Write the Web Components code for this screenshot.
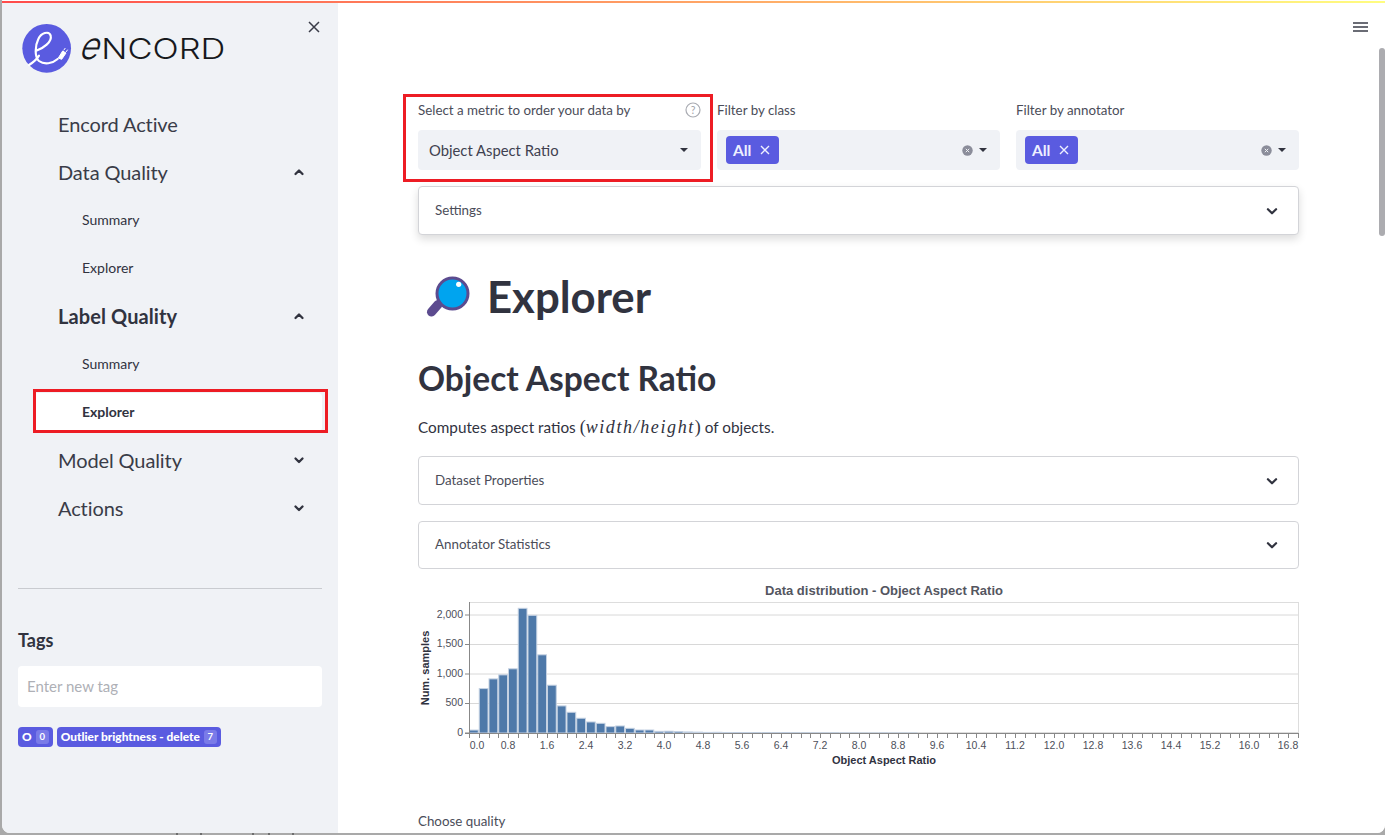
<!DOCTYPE html>
<html lang="en"><head><meta charset="utf-8"><title>Encord Active</title>
<style>
html,body{margin:0;padding:0;height:100%;overflow:hidden;background:#a9a9a9}
body{font-family:Lato,"Open Sans",sans-serif;color:#31333f}
</style></head><body>
<enc-app>
  <enc-sidebar slot="side">
    <nav-item level="0">Encord Active</nav-item>
    <nav-item level="0" chev="up">Data Quality</nav-item>
    <nav-item level="1">Summary</nav-item>
    <nav-item level="1">Explorer</nav-item>
    <nav-item level="0" chev="up" strong>Label Quality</nav-item>
    <nav-item level="1">Summary</nav-item>
    <nav-item level="1" selected>Explorer</nav-item>
    <nav-item level="0" chev="down">Model Quality</nav-item>
    <nav-item level="0" chev="down">Actions</nav-item>
  </enc-sidebar>
  <enc-main slot="main"></enc-main>
</enc-app>
<script>
function def(name, css, html, init){
  customElements.define(name, class extends HTMLElement{
    connectedCallback(){
      if(this.shadowRoot) return;
      const r=this.attachShadow({mode:'open'});
      r.innerHTML='<style>'+css+'</style>'+(typeof html==='function'?html(this):html);
      if(init) init(r,this);
    }
  });
}
const chev=(dir,w,sw)=>`<svg width="${w}" height="${w}" viewBox="0 0 12 12" fill="none" stroke="currentColor" stroke-width="${sw}" stroke-linecap="round" stroke-linejoin="round"><path d="${dir==='up'?'M2.5 8 L6 4.5 L9.5 8':'M2.5 4.5 L6 8 L9.5 4.5'}"/></svg>`;
const caret='<svg width="8" height="4" viewBox="0 0 8 4"><path d="M0 0H8L4 4Z" fill="#31333f"/></svg>';

def('enc-app',`
:host{display:block;width:1385px;height:835px;background:#a9a9a9;position:relative}
.win{margin-left:2px;width:1383px;height:833px;background:#fff;border-radius:0 0 8px 8px;overflow:hidden;display:flex;flex-direction:column;padding-top:1px;box-sizing:border-box;position:relative}
.bar{height:2px;flex:none;background:linear-gradient(90deg,#ff4b4b,#fffd80)}
.body{flex:1;display:flex;min-height:0}
.marks{position:absolute;left:0;bottom:0;width:340px;height:2px}
`,`<div class="win"><div class="bar"></div><div class="body"><slot name="side"></slot><slot name="main"></slot></div></div>
<svg class="marks" viewBox="0 0 340 2"><path d="M177 0V2M201 0V2M253 0V2M269 0V2M293 0V2" stroke="#333" stroke-width="1"/></svg>`);

def('enc-logo',`:host{display:block;width:220px;height:65px}svg{display:block}`,
`<svg width="220" height="65" viewBox="0 0 660 195">
<circle cx="95" cy="100" r="73" fill="#5a5be0"/>
<path d="M42 150 C55 142 66 132 72 122 M62 108 C85 100 112 80 107 62 C102 46 78 54 70 72 C60 92 58 125 72 138 C88 150 112 146 128 132" fill="none" stroke="#fff" stroke-width="6.5" stroke-linecap="round"/>
<path d="M130 129 L143 108 L153 114 L140 133 Z M146 106 L151 99 M153 111 L158 104" fill="#fff" stroke="#fff" stroke-width="3"/>
<text x="0" y="0" transform="matrix(.9 0 -.36 1 188 132)" font-family="Inter,sans-serif" font-weight="300" font-size="112" fill="#17181c">e</text>
<text x="259" y="132" font-family="Inter,sans-serif" font-weight="300" font-size="86" textLength="372" lengthAdjust="spacingAndGlyphs" fill="#17181c">NCORD</text>
</svg>`);

def('red-box',`:host{position:absolute;border:3px solid #ed1c24;box-sizing:border-box;pointer-events:none;z-index:5}`,``);

def('nav-item',`
:host{display:flow-root;height:48px;position:relative;box-sizing:border-box}
.row{display:flex;align-items:center;height:100%;box-sizing:border-box}
:host([level="0"]) .row{padding-left:56px;font-size:20px;font-weight:400;color:#3a3c48;letter-spacing:-.1px}
:host([strong]) .row{font-weight:700;letter-spacing:.1px;color:#31333f}
:host([level="1"]) .row{padding-left:80px;padding-bottom:2px;font-size:14px;font-weight:400;color:#31333f}
:host([selected]) .row{height:38px;margin:5px 16px 5px 32px;padding-left:48px;padding-bottom:2px;background:#fff;border-radius:4px;font-weight:700}
.chev{position:absolute;left:291px;top:18px;width:12px;height:12px;color:#31333f;display:flex}
`,h=>{const c=h.getAttribute('chev');return `<div class="row"><slot></slot></div>${c?`<span class="chev">${chev(c,12,2.3)}</span>`:''}${h.hasAttribute('selected')?'<red-box style="left:31px;top:1px;width:295px;height:44px"></red-box>':''}`});

def('tag-chip',`
:host{display:inline-flex;align-items:center;height:20px;background:#5a5be0;color:#fff;border-radius:4px;font-size:11.9px;font-weight:900;padding:0 4px 0 4px;gap:4px;white-space:nowrap;line-height:1}
.n{display:inline-flex;align-items:center;justify-content:center;min-width:13px;height:14px;border-radius:3px;background:#7a7be8;font-size:9.5px;font-weight:700}
`,h=>`<slot></slot><span class="n">${h.getAttribute('n')}</span>`);

def('enc-sidebar',`
:host{display:block;width:336px;flex:none;background:#f0f2f6;height:100%;position:relative;box-sizing:border-box;padding-top:97px}
.logo{position:absolute;left:13px;top:12px}
.x{position:absolute;left:306px;top:18px;width:12px;height:12px}
hr{border:0;border-top:1px solid #c9cbd0;margin:56px 16px 0 16px}
h3{margin:40px 16px 0;font-size:18px;line-height:22px;font-weight:700;color:#31333f}
.in{margin:15px 16px 0;height:41px;box-sizing:border-box;background:#fff;border-radius:4px;display:flex;align-items:center;padding:0 0 2px 9px;font-size:15px;color:#aeb0b6}
.chips{margin:20px 16px 0;display:flex;gap:4px}
`,`<enc-logo class="logo"></enc-logo>
<svg class="x" viewBox="0 0 12 12"><path d="M1 1L11 11M11 1L1 11" stroke="#3a3c48" stroke-width="1.5"/></svg>
<slot></slot>
<hr><h3>Tags</h3><div class="in">Enter new tag</div>
<div class="chips"><tag-chip n="0">O</tag-chip><tag-chip n="7">Outlier brightness - delete</tag-chip></div>`);

def('enc-select',`
:host{display:block;position:relative;font-size:13.35px}
.lab{height:16px;line-height:16px;margin-bottom:12px;color:#4b4d59;display:flex;justify-content:space-between;align-items:center}
.box{height:40px;background:#f0f2f6;border-radius:4px;display:flex;align-items:center;justify-content:space-between;padding:0 13px 0 11px;font-size:14.8px;color:#3f4150}
.help{display:block}
`,`<div class="lab"><span>Select a metric to order your data by</span>
<svg class="help" width="16" height="16" viewBox="0 0 16 16"><circle cx="8" cy="8" r="7" fill="none" stroke="#a9abb2" stroke-width="1.2"/><text x="8" y="11.5" font-size="10.5" font-family="Lato,sans-serif" text-anchor="middle" fill="#a0a2a9">?</text></svg></div>
<div class="box"><span>Object Aspect Ratio</span>${caret}</div>
<red-box style="left:-15px;top:-8px;width:310px;height:88px"></red-box>`);

def('enc-multi',`
:host{display:block;font-size:13.35px}
.lab{height:16px;line-height:16px;margin-bottom:12px;color:#4b4d59}
.box{height:40px;background:#f0f2f6;border-radius:4px;display:flex;align-items:center;padding:0 13px 0 9px}
.chip{height:28px;background:#5a5be0;border-radius:4px;color:#eef0ff;display:flex;align-items:center;gap:9px;padding:0 9px 0 7px;font-size:15.5px;font-weight:700}
.sp{flex:1}.ctl{display:flex;align-items:center;gap:6px}
`,h=>`<div class="lab">${h.getAttribute('label')}</div><div class="box"><div class="chip">All<svg width="10" height="10" viewBox="0 0 10 10"><path d="M1 1L9 9M9 1L1 9" stroke="#eef0ff" stroke-width="1.4"/></svg></div><div class="sp"></div><div class="ctl"><svg width="11" height="11" viewBox="0 0 11 11"><circle cx="5.5" cy="5.5" r="5.2" fill="#8b8d9a"/><path d="M3.8 3.8L7.2 7.2M7.2 3.8L3.8 7.2" stroke="#f0f2f6" stroke-width="1"/></svg>${caret}</div></div>`);

def('enc-expander',`
:host{display:block;box-sizing:border-box;border:1px solid #d3d4d8;border-radius:4px;background:#fff;display:flex;align-items:center;justify-content:space-between;padding:0 19px 0 16px;font-size:13.35px;color:#4b4d59;height:49px}
:host([shadowed]){box-shadow:0 4px 8px rgba(0,0,0,.14)}
.t{padding-bottom:2px}
.c{display:flex;color:#31333f}
`,()=>`<span class="t"><slot></slot></span><span class="c">${chev('down',14,1.9)}</span>`);

def('enc-emoji',`:host{display:block;width:56px;height:56px}svg{display:block}`,
`<svg width="56" height="56" viewBox="0 0 56 56"><path d="M25 31L14 42" stroke="#5c4b8f" stroke-width="3"/><path d="M20 34.5L13.5 42" stroke="#5c4b8f" stroke-width="9" stroke-linecap="round"/><circle cx="34.5" cy="23.5" r="15.5" fill="#00a4ef" stroke="#5c4b8f" stroke-width="3"/><circle cx="40.7" cy="14.3" r="2.6" fill="#fff"/></svg>`);

def('enc-chart',`:host{display:block;height:200px}svg{display:block;overflow:visible}text{font-family:"Liberation Sans",Arial,sans-serif}`,
()=>{
  const x0=51,y0=153,sx=39/.8*.2;
  const vals=[50,753,917,985,1088,2113,1994,1325,810,459,351,250,187,164,108,119,79,51,51,28,30,25,18,15,10,12,8,6,8,5,5,4,6,3,3,2,2,3,2,2,1,1,2,1,1,1];
  const py=v=>y0-v*29.5/500;
  let s='';
  s+='<rect x="51.5" y="22.5" width="829" height="130" fill="none" stroke="#ddd"/>';
  [500,1000,1500,2000].forEach(v=>{s+=`<path d="M${x0} ${py(v)}H880" stroke="#d8d8d8"/>`});
  vals.forEach((v,i)=>{const h=v*29.5/500;s+=`<rect x="${x0+i*sx+.5}" y="${y0-h}" width="${sx-1}" height="${h}" fill="#4e79a9" stroke="#c4d1e2" stroke-width="1"/>`});
  s+=`<path d="M51.5 22V157M47 153.5H881" stroke="#888" fill="none"/>`;
  for(let i=0;i<=85;i++){const x=Math.round(x0+i*sx)+.5;s+=`<path d="M${x} 153V158" stroke="#888"/>`}
  [0,500,1000,1500,2000].forEach(v=>{s+=`<path d="M47 ${py(v)}H51" stroke="#888"/><text x="45" y="${py(v)+2.5}" font-size="10.5" text-anchor="end" fill="#4d4f5a">${v?v.toLocaleString('en-US'):0}</text>`});
  for(let i=0;i<=21;i++){const x=x0+i*39;const lab=(i*.8).toFixed(1);s+=`<text x="${i?x:x+8}" y="168.5" font-size="10.5" text-anchor="middle" fill="#4d4f5a">${lab}</text>`}
  s+=`<text x="466" y="15" font-size="13" font-weight="700" text-anchor="middle" fill="#54565f">Data distribution - Object Aspect Ratio</text>`;
  s+=`<text x="466" y="184" font-size="11" font-weight="700" text-anchor="middle" fill="#31333f">Object Aspect Ratio</text>`;
  s+=`<text transform="translate(11 88) rotate(-90)" font-size="11" font-weight="700" text-anchor="middle" fill="#31333f">Num. samples</text>`;
  return `<svg width="881" height="200" viewBox="0 0 881 200">${s}</svg>`;
});

def('enc-main',`
:host{display:block;flex:1;height:100%;position:relative;background:#fff;box-sizing:border-box;padding:99px 86px 0 80px;overflow:hidden;min-width:0}
.cols{display:grid;grid-template-columns:283px 283px 283px;gap:16px}
enc-expander.set{margin-top:16px}
.hero{display:flex;align-items:center;gap:14px;margin-top:35px;height:56px}
h1{margin:0 0 0 -1px;font-size:43.7px;line-height:56px;font-weight:700;color:#31333f;padding-bottom:4px}
h2{margin:30px 0 0;font-size:33.5px;line-height:44px;font-weight:700;color:#31333f}
p{margin:15px 0 0;font-size:15.3px;line-height:24px;color:#31333f}
i{font-family:"Liberation Serif",serif;font-size:18px;letter-spacing:1.6px}
b{font-family:"Liberation Serif",serif;font-weight:400;font-size:18px}
.e1{margin-top:17px}.e2{margin-top:16px;height:48px}
enc-chart{margin-top:11px}
.cq{margin-top:33px;font-size:13.35px;line-height:16px;color:#4b4d59}
.menu{position:absolute;right:17px;top:19px;display:block}
.sb{position:absolute;right:0;top:45px;width:6px;height:188px;border-radius:3px;background:#acacb0}
`,`<svg class="menu" width="15" height="10" viewBox="0 0 15 10"><path d="M0 1H15M0 5H15M0 9H15" stroke="#3a3c48" stroke-width="1.6"/></svg>
<div class="sb"></div>
<div class="cols"><enc-select></enc-select><enc-multi label="Filter by class"></enc-multi><enc-multi label="Filter by annotator"></enc-multi></div>
<enc-expander class="set" shadowed>Settings</enc-expander>
<div class="hero"><enc-emoji></enc-emoji><h1>Explorer</h1></div>
<h2>Object Aspect Ratio</h2>
<p>Computes aspect ratios <b>(</b><i>width/height</i><b>)</b> of objects.</p>
<enc-expander class="e1">Dataset Properties</enc-expander>
<enc-expander class="e2">Annotator Statistics</enc-expander>
<enc-chart></enc-chart>
<div class="cq">Choose quality</div>`);
</script>
</body></html>
